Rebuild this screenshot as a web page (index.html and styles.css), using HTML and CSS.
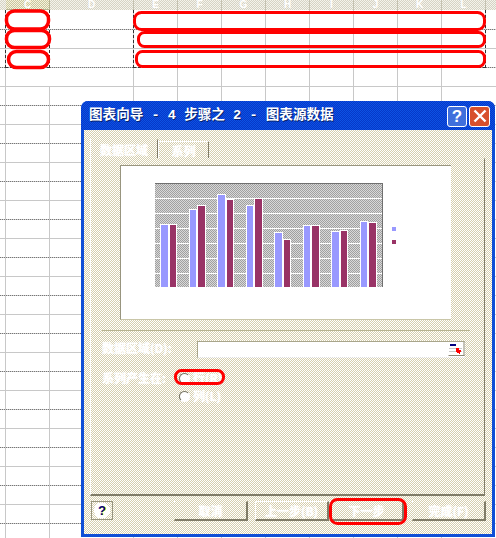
FILE: index.html
```html
<!DOCTYPE html>
<html lang="zh">
<head>
<meta charset="utf-8">
<title>图表向导</title>
<link rel="stylesheet" href="styles.css">
</head>
<body>
<div class="stage">
  <div class="sheet">
    <div class="col-head">
      <span class="hc hc-a"></span><span class="hc hc-c hc-sel">C</span><span class="hc hc-d">D</span><span class="hc">E</span><span class="hc">F</span><span class="hc">G</span><span class="hc">H</span><span class="hc">I</span><span class="hc">J</span><span class="hc">K</span><span class="hc">L</span><span class="hc hc-z"></span>
    </div>
    <div class="grid grid-cols"></div>
    <div class="grid grid-solid"></div>
    <div class="grid grid-dotted"></div>
    <div class="ants ants-l"></div>
    <div class="ants ants-r"></div>
  </div>

  <section class="dialog">
    <header class="titlebar">
      <h1 class="title">图表向导 - 4 步骤之 2 - 图表源数据</h1>
      <div class="winbtns">
        <span class="winbtn winbtn-help">?</span>
        <span class="winbtn winbtn-close">
          <svg width="16" height="16" viewBox="0 0 16 16"><path d="M2.5 2.5l11 11M13.5 2.5l-11 11" stroke="#fff" stroke-width="2.4" fill="none"/></svg>
        </span>
      </div>
    </header>
    <div class="client">
      <div class="tabs">
        <span class="tab tab-on">数据区域</span>
        <span class="tab tab-off">系列</span>
      </div>
      <div class="panel">
        <div class="preview">
          <div class="chart">
            <div class="plot">
              <div class="group"><i class="bar a" style="height:63px"></i><i class="bar b" style="height:63px"></i></div>
              <div class="group"><i class="bar a" style="height:78px"></i><i class="bar b" style="height:82px"></i></div>
              <div class="group"><i class="bar a" style="height:93px"></i><i class="bar b" style="height:88px"></i></div>
              <div class="group"><i class="bar a" style="height:82px"></i><i class="bar b" style="height:89px"></i></div>
              <div class="group"><i class="bar a" style="height:55px"></i><i class="bar b" style="height:48px"></i></div>
              <div class="group"><i class="bar a" style="height:62px"></i><i class="bar b" style="height:62px"></i></div>
              <div class="group"><i class="bar a" style="height:56px"></i><i class="bar b" style="height:57px"></i></div>
              <div class="group"><i class="bar a" style="height:66px"></i><i class="bar b" style="height:65px"></i></div>
            </div>
            <div class="legend"><i class="key a"></i><i class="key b"></i></div>
          </div>
        </div>
        <div class="rule"></div>
        <div class="range-row">
          <label class="lbl">数据区域(D):</label>
          <div class="range-input">
            <span class="picker">
              <svg width="17" height="14" viewBox="0 0 17 14"><path d="M0.5 13.5h16M16 0v14" stroke="#8a8672" stroke-width="1" fill="none"/><rect x="2" y="2" width="6" height="2" fill="#000080"/><rect x="1" y="6" width="13" height="1" fill="#c8c8c8"/><rect x="1" y="9" width="13" height="1" fill="#c8c8c8"/><path d="M8 6h3v2h2v2h-1v2h-1v-1H9v-1H8z" fill="#f00"/></svg>
            </span>
          </div>
        </div>
        <div class="series-row">
          <span class="lbl">系列产生在:</span>
          <div class="radios">
            <span class="radio"><i class="dot"></i>行(R)</span>
            <span class="radio"><i class="dot"></i>列(L)</span>
          </div>
        </div>
      </div>
      <footer class="actions">
        <span class="helpbtn">?</span>
        <span class="btn btn-cancel">取消</span>
        <span class="btn btn-prev">上一步(B)</span>
        <span class="btn btn-next">下一步</span>
        <span class="btn btn-done">完成(F)</span>
      </footer>
    </div>
  </section>

  <svg class="marks" width="496" height="538" viewBox="0 0 496 538" fill="none" stroke="#f00" stroke-width="3">
    <rect class="mark-thick" x="6.5" y="11" width="42" height="18" rx="8"/>
    <rect class="mark-thick" x="6.5" y="30.5" width="43" height="17" rx="8"/>
    <rect class="mark-thick" x="8.5" y="51.5" width="40" height="16" rx="8"/>
    <rect x="134.5" y="12.5" width="350" height="17" rx="7"/>
    <rect x="138.5" y="32.5" width="346" height="14" rx="6"/>
    <rect x="136.5" y="51.5" width="348" height="15" rx="6"/>
    <rect x="175.5" y="370.5" width="48" height="13" rx="6"/>
    <rect x="330.5" y="499.5" width="75" height="24" rx="7"/>
  </svg>
</div>
</body>
</html>
```
FILE: styles.css
```css
* { box-sizing: border-box; }
html, body { margin: 0; padding: 0; }
body { background: #fff; font-family: "Noto Sans CJK SC", "Liberation Sans", sans-serif; overflow: hidden; }
.stage { position: relative; width: 496px; height: 538px; overflow: hidden; }
.sheet { position: absolute; inset: 0; }

.col-head { display: flex; height: 10px; overflow: hidden; background: repeating-conic-gradient(#d6d3c4 0 25%, #f4f3ec 0 50%) 0 0 / 2px 2px; }
.hc { width: 44px; flex: none; color: #fff; font: 700 10px/10px "Liberation Sans", sans-serif; text-align: center; border-right: 1px solid #c4c1b0; }
.hc-a { width: 6px; border: 0; }
.hc-d { width: 84px; }
.hc-z { width: 10px; border: 0; }
.hc-sel { background: repeating-conic-gradient(#c9c59e 0 25%, #f6f3dc 0 50%) 0 0 / 2px 2px; border-right-color: #b5b28f; box-shadow: inset 0 -1px #b5b28f; }

.grid { position: absolute; left: 0; top: 10px; width: 496px; height: 528px; }
.grid-cols {
  background:
    linear-gradient(#c8c8c8, #c8c8c8) 5px 0 / 1px 100% no-repeat,
    linear-gradient(#c8c8c8, #c8c8c8) 49px 76px / 1px 100% no-repeat,
    linear-gradient(#c8c8c8, #c8c8c8) 133px 0 / 1px 100% no-repeat,
    linear-gradient(#c8c8c8, #c8c8c8) 177px 0 / 1px 100% no-repeat,
    linear-gradient(#c8c8c8, #c8c8c8) 221px 0 / 1px 100% no-repeat,
    linear-gradient(#c8c8c8, #c8c8c8) 265px 0 / 1px 100% no-repeat,
    linear-gradient(#c8c8c8, #c8c8c8) 309px 0 / 1px 100% no-repeat,
    linear-gradient(#c8c8c8, #c8c8c8) 353px 0 / 1px 100% no-repeat,
    linear-gradient(#c8c8c8, #c8c8c8) 397px 0 / 1px 100% no-repeat,
    linear-gradient(#c8c8c8, #c8c8c8) 441px 0 / 1px 100% no-repeat,
    linear-gradient(#c8c8c8, #c8c8c8) 485px 0 / 1px 58px no-repeat;
}
.grid-solid { top: 48px; height: 490px; background: linear-gradient(to bottom, #c8c8c8 1px, transparent 1px) 0 0 / 100% 38px; }
.grid-dotted { top: 29px; height: 509px; background: repeating-linear-gradient(to right, #777 0 1px, #ccc 1px 2px); -webkit-mask: linear-gradient(to bottom, #000 1px, transparent 1px) 0 0 / 100% 38px; mask: linear-gradient(to bottom, #000 1px, transparent 1px) 0 0 / 100% 38px; }
.ants { position: absolute; top: 10px; height: 58px; border: 1px dashed #333; border-top: 0; }
.ants-l { left: 5px; width: 45px; }
.ants-r { left: 133px; width: 353px; }

.dialog { position: absolute; left: 81px; top: 101px; width: 414px; height: 436px; display: flex; flex-direction: column; background: #0f4ed6; border-radius: 7px 7px 0 0; padding: 0 3px 3px; }
.titlebar { height: 29px; flex: none; display: flex; align-items: center; justify-content: space-between; padding: 0 5px 0 8px; margin: 0 -3px; background: repeating-conic-gradient(#0638c8 0 25%, #0d52e4 0 50%) 0 0 / 2px 2px; border-radius: 7px 7px 0 0; }
.title { margin: 0; color: #fff; font-family: "Liberation Mono", "Noto Sans CJK SC", monospace; font-size: 13.6px; line-height: 16px; font-weight: 700; white-space: pre; text-shadow: 1px 1px #06246e; }
.winbtns { display: flex; gap: 2px; margin-top: 1px; }
.winbtn { width: 21px; height: 21px; border: 1px solid #fff; border-radius: 3px; display: flex; align-items: center; justify-content: center; color: #fff; font: 700 17px/1 "Liberation Sans", sans-serif; }
.winbtn-help { width: 20px; background: #3f6fdc; }
.winbtn-close { background: #d8502c; }

.client { flex: 1; min-height: 0; display: flex; flex-direction: column; padding: 9px 7px 0 6px; background: repeating-conic-gradient(#d6cfae 0 25%, #fff 0 50%) 0 0 / 2px 2px; color: #fff; font-size: 12px; text-shadow: 0 0 2px #fff; }
.tabs { display: flex; height: 19px; flex: none; }
.tab { display: flex; align-items: center; justify-content: center; font-size: 12px; font-weight: 700; border-top: 1px dotted #fff; border-left: 1px dotted #fff; border-right: 1px solid #807c68; }
.tab-on { width: 68px; }
.tab-off { width: 51px; margin-top: 2px; }

.panel { height: 338px; flex: none; display: flex; flex-direction: column; border-top: 1px dotted #fff; border-left: 1px dotted #fff; border-right: 1px solid #807c68; border-bottom: 2px solid #807c68; }
.preview { margin: 6px 33px 0 29px; height: 155px; flex: none; background: #fff; border-top: 1px solid #98957f; border-left: 1px solid #98957f; border-bottom: 1px solid #c9c6a8; padding: 17px 0 0 34px; }
.chart { display: flex; align-items: flex-start; }
.plot { position: relative; width: 228px; height: 104px; display: flex; align-items: flex-end; padding: 0 1px 0 5px; gap: 11.5px;
  border-top: 1px solid #707070; border-right: 1px solid #707070;
  background:
    repeating-linear-gradient(to bottom, transparent 0 14px, #fff 14px 15px),
    repeating-conic-gradient(#a0a0a0 0 25%, #d8d8d8 0 50%) 0 0 / 2px 2px;
}
.group { width: 17px; flex: none; display: flex; align-items: flex-end; gap: 0; }
.bar { display: block; flex: 1; border: 1px solid #fff; border-bottom: 0; }
.bar.a, .key.a { background: #9999ff; }
.bar.b, .key.b { background: #993366; }
.legend { display: flex; flex-direction: column; gap: 9px; margin: 44px 0 0 9px; }
.key { display: block; width: 4px; height: 4px; }

.rule { margin: 10px 14px 0 11px; height: 1px; background: #b5b28f; flex: none; }
.range-row { display: flex; align-items: center; margin: 10px 0 0 11px; height: 17px; flex: none; }
.lbl { width: 95px; flex: none; color: #fff; font-size: 12px; font-weight: 700; line-height: 16px; margin-top: -3px; }
.range-input { width: 268px; height: 17px; background: #fff; border-top: 1px solid #a8a58c; border-left: 1px solid #a8a58c; border-bottom: 1px dotted #ddd; display: flex; justify-content: flex-end; }
.picker { display: block; width: 17px; height: 15px; }
.series-row { display: flex; margin: 12px 0 0 11px; }
.series-row .lbl { width: 77px; margin-top: 0; }
.radios { display: flex; flex-direction: column; gap: 2px; }
.radio { display: flex; align-items: center; gap: 3px; height: 16px; line-height: 16px; font-weight: 700; }
.dot { display: block; width: 11px; height: 11px; background: #fff; border-radius: 50%; border: 1px solid; border-color: #6f6c5a #fff #fff #6f6c5a; }

.actions { display: flex; align-items: flex-start; margin-top: 5px; }
.helpbtn { width: 22px; height: 19px; margin: 0 61px 0 1px; flex: none; border: 1px solid #98957f; color: #00008b; font: 700 13px/17px "Liberation Sans", sans-serif; text-align: center; text-shadow: 1px 0 #ff0; background: radial-gradient(circle, #fff 60%, transparent 62%); }
.btn { height: 20px; width: 74px; flex: none; display: flex; align-items: center; justify-content: center; font-size: 12px; font-weight: 700; border-top: 1px dotted #fff; border-left: 1px dotted #fff; border-right: 2px solid #807c68; border-bottom: 2px solid #807c68; }
.btn-prev { margin-left: 7px; }
.btn-next { margin-left: 1px; }
.btn-done { margin-left: 8px; }

.marks { position: absolute; left: 0; top: 0; pointer-events: none; }
.mark-thick { stroke-width: 3.5; }
```
